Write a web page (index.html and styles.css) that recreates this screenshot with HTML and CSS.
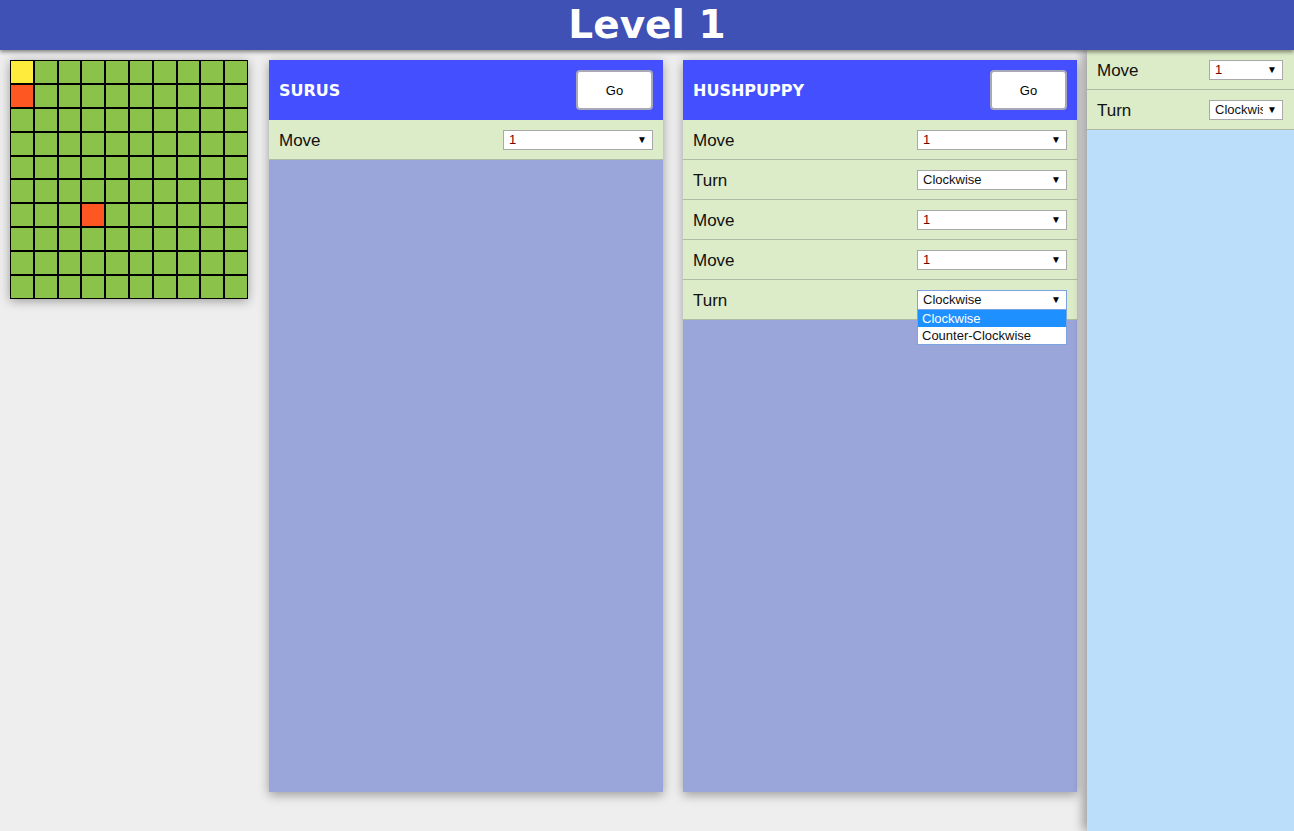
FILE: index.html
```html
<!DOCTYPE html>
<html>
<head>
<meta charset="utf-8">
<link rel="stylesheet" href="styles.css">
</head>
<body>
<header class="topbar"><h1 class="title">Level 1</h1></header>
<main class="main">
  <div class="board">
    <div class="cell start"></div><div class="cell"></div><div class="cell"></div><div class="cell"></div><div class="cell"></div><div class="cell"></div><div class="cell"></div><div class="cell"></div><div class="cell"></div><div class="cell"></div>
    <div class="cell bot"></div><div class="cell"></div><div class="cell"></div><div class="cell"></div><div class="cell"></div><div class="cell"></div><div class="cell"></div><div class="cell"></div><div class="cell"></div><div class="cell"></div>
    <div class="cell"></div><div class="cell"></div><div class="cell"></div><div class="cell"></div><div class="cell"></div><div class="cell"></div><div class="cell"></div><div class="cell"></div><div class="cell"></div><div class="cell"></div>
    <div class="cell"></div><div class="cell"></div><div class="cell"></div><div class="cell"></div><div class="cell"></div><div class="cell"></div><div class="cell"></div><div class="cell"></div><div class="cell"></div><div class="cell"></div>
    <div class="cell"></div><div class="cell"></div><div class="cell"></div><div class="cell"></div><div class="cell"></div><div class="cell"></div><div class="cell"></div><div class="cell"></div><div class="cell"></div><div class="cell"></div>
    <div class="cell"></div><div class="cell"></div><div class="cell"></div><div class="cell"></div><div class="cell"></div><div class="cell"></div><div class="cell"></div><div class="cell"></div><div class="cell"></div><div class="cell"></div>
    <div class="cell"></div><div class="cell"></div><div class="cell"></div><div class="cell bot"></div><div class="cell"></div><div class="cell"></div><div class="cell"></div><div class="cell"></div><div class="cell"></div><div class="cell"></div>
    <div class="cell"></div><div class="cell"></div><div class="cell"></div><div class="cell"></div><div class="cell"></div><div class="cell"></div><div class="cell"></div><div class="cell"></div><div class="cell"></div><div class="cell"></div>
    <div class="cell"></div><div class="cell"></div><div class="cell"></div><div class="cell"></div><div class="cell"></div><div class="cell"></div><div class="cell"></div><div class="cell"></div><div class="cell"></div><div class="cell"></div>
    <div class="cell"></div><div class="cell"></div><div class="cell"></div><div class="cell"></div><div class="cell"></div><div class="cell"></div><div class="cell"></div><div class="cell"></div><div class="cell"></div><div class="cell"></div>
  </div>

  <section class="panel">
    <div class="panel-head">
      <span class="panel-name">SURUS</span>
      <button class="go">Go</button>
    </div>
    <div class="row">
      <span class="label">Move</span>
      <div class="select"><span class="val num">1</span><span class="arrow">▼</span></div>
    </div>
  </section>

  <section class="panel">
    <div class="panel-head">
      <span class="panel-name">HUSHPUPPY</span>
      <button class="go">Go</button>
    </div>
    <div class="row">
      <span class="label">Move</span>
      <div class="select"><span class="val num">1</span><span class="arrow">▼</span></div>
    </div>
    <div class="row">
      <span class="label">Turn</span>
      <div class="select"><span class="val">Clockwise</span><span class="arrow">▼</span></div>
    </div>
    <div class="row">
      <span class="label">Move</span>
      <div class="select"><span class="val num">1</span><span class="arrow">▼</span></div>
    </div>
    <div class="row">
      <span class="label">Move</span>
      <div class="select"><span class="val num">1</span><span class="arrow">▼</span></div>
    </div>
    <div class="row">
      <span class="label">Turn</span>
      <div class="select focused"><span class="val">Clockwise</span><span class="arrow">▼</span>
        <ul class="options">
          <li class="opt selected">Clockwise</li>
          <li class="opt">Counter-Clockwise</li>
        </ul>
      </div>
    </div>
  </section>

  <aside class="sidebar">
    <div class="row">
      <span class="label">Move</span>
      <div class="select small"><span class="val num">1</span><span class="arrow">▼</span></div>
    </div>
    <div class="row">
      <span class="label">Turn</span>
      <div class="select small"><span class="val">Clockwise</span><span class="arrow">▼</span></div>
    </div>
  </aside>
</main>
</body>
</html>
```

FILE: styles.css
```css
html, body {
  margin: 0;
  padding: 0;
  height: 100%;
  overflow: hidden;
}
body {
  background: #eeeeee;
  font-family: "Liberation Sans", Arial, sans-serif;
}
.topbar {
  height: 50px;
  background: #3f51b5;
  box-shadow: 0 2px 4px rgba(0, 0, 0, 0.45);
  position: relative;
  z-index: 5;
}
.title {
  margin: 0;
  text-align: center;
  color: #ffffff;
  font-family: "DejaVu Sans", Verdana, sans-serif;
  font-weight: bold;
  font-size: 39px;
  line-height: 50px;
}
.main {
  display: flex;
  align-items: flex-start;
  padding-left: 10px;
}
.board {
  margin-top: 10px;
  width: 236px;
  height: 237px;
  padding: 1px;
  background: #000;
  display: grid;
  grid-template-columns: repeat(10, 1fr);
  grid-template-rows: repeat(10, 1fr);
  gap: 2px;
  box-shadow: 0 2px 10px rgba(0, 0, 0, 0.35);
  margin-right: 21px;
  flex: none;
}
.cell { background: #8bc34a; }
.cell.start { background: #ffeb3b; }
.cell.bot { background: #ff5722; }

.panel {
  margin-top: 10px;
  width: 394px;
  height: 732px;
  background: #9aa5d9;
  box-shadow: 0 3px 10px rgba(0, 0, 0, 0.35);
  margin-right: 20px;
  flex: none;
}
.panel-head {
  height: 60px;
  background: #4450ff;
  display: flex;
  align-items: center;
  justify-content: space-between;
  padding: 0 10px;
}
.panel-name {
  color: #ffffff;
  font-family: "DejaVu Sans", Verdana, sans-serif;
  font-weight: bold;
  font-size: 16px;
}
.go {
  width: 77px;
  height: 40px;
  background: #ffffff;
  border: 2px solid #a8a8b8;
  border-radius: 4px;
  font-family: "Liberation Sans", Arial, sans-serif;
  font-size: 13px;
  color: #000;
  padding: 0;
}
.row {
  height: 39px;
  background: #dcebc8;
  border-bottom: 1px solid #aebaa2;
  display: flex;
  align-items: center;
  justify-content: space-between;
  padding: 0 10px;
}
.label {
  font-size: 17px;
  color: #111;
  padding-top: 2px;
}
.select {
  position: relative;
  width: 150px;
  height: 20px;
  box-sizing: border-box;
  border: 1px solid #a9a9a9;
  background: #fff;
  display: flex;
  align-items: center;
  justify-content: space-between;
  padding: 0 5px 0 5px;
  font-size: 13px;
  color: #111;
}
.select.small {
  width: 74px;
  margin-right: 1px;
}
.select.focused {
  border-color: #7ba3e0;
}
.val { white-space: nowrap; overflow: hidden; min-width: 0; }
.val.num { color: #7a0000; }
.arrow {
  font-size: 10px;
  color: #000;
  margin-left: 4px;
  flex: none;
}
.options {
  position: absolute;
  left: -1px;
  top: 18px;
  width: 150px;
  box-sizing: border-box;
  margin: 0;
  padding: 0;
  list-style: none;
  background: #fff;
  border: 1px solid #7ba3e0;
  z-index: 3;
}
.opt {
  height: 17px;
  line-height: 17px;
  padding-left: 4px;
  font-size: 13px;
  color: #111;
}
.opt.selected {
  background: #1e90ff;
  color: #fff;
}
.sidebar {
  margin-left: -10px;
  width: 207px;
  height: 781px;
  background: #bbdefb;
  box-shadow: -4px 0 10px rgba(0, 0, 0, 0.35);
  flex: none;
  position: relative;
  z-index: 2;
}
```
